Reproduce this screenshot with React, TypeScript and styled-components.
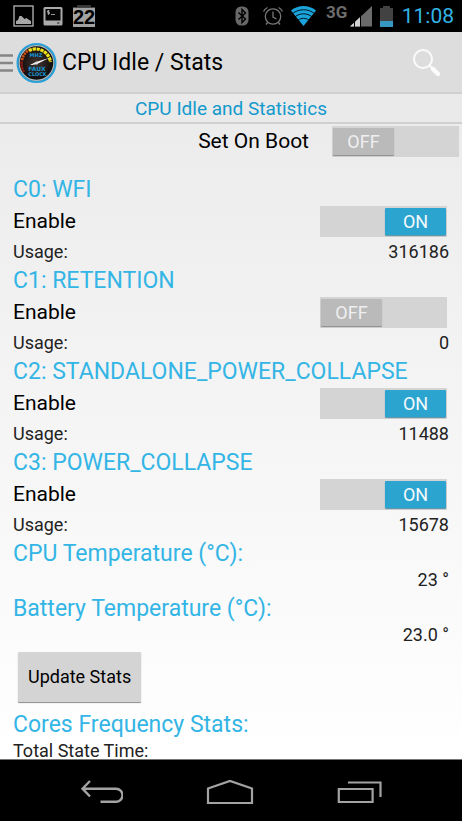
import React, { useState } from "react";
import styled, { createGlobalStyle } from "styled-components";

const GlobalStyle = createGlobalStyle`
  * { box-sizing: border-box; }
  body { margin: 0; font-family: Roboto, "Liberation Sans", sans-serif; color: #0a0a0a; background: #000; }
  svg { display: block; flex: none; }
`;

const Screen = styled.div`
  display: flex;
  flex-direction: column;
  height: 100vh;
  overflow: hidden;
`;

const StatusBar = styled.header`
  display: flex;
  align-items: center;
  justify-content: space-between;
  flex: none;
  height: 32px;
  padding: 0 8px 0 13px;
  background: #000;
`;

const StatusGroup = styled.div<{ $gap: number }>`
  display: flex;
  align-items: center;
  gap: ${(p) => p.$gap}px;
`;

const Clock = styled.time`
  margin-left: 2px;
  color: #33b5e5;
  font-size: 21px;
  line-height: 32px;
`;

const Page = styled.div`
  display: flex;
  flex-direction: column;
  flex: 1;
  min-height: 0;
  background: linear-gradient(#e9e9e9, #ffffff);
`;

const ActionBar = styled.div`
  display: flex;
  align-items: center;
  flex: none;
  height: 62px;
  padding: 2px 20px 0 0;
  background: #dddddd;
  border-bottom: 2px solid #cfcfcf;
`;

const HomeButton = styled.button`
  display: flex;
  align-items: center;
  gap: 3px;
  padding: 0;
  border: 0;
  background: none;
`;

const Title = styled.h1`
  flex: 1;
  margin: 0 0 0 5px;
  font-size: 23px;
  line-height: 32px;
  font-weight: 400;
  color: #000;
`;

const IconButton = styled.button`
  padding: 0;
  border: 0;
  background: none;
`;

const TabStrip = styled.h2`
  flex: none;
  margin: 0;
  padding-top: 1px;
  font-size: 19px;
  line-height: 27px;
  font-weight: 400;
  text-align: center;
  color: #1299cd;
  background: #eaeaea;
  border-bottom: 2px solid #d0d0d0;
`;

const Content = styled.main`
  flex: 1;
  min-height: 0;
  overflow: hidden;
`;

const BootRow = styled.div`
  display: flex;
  align-items: center;
  justify-content: flex-end;
  gap: 23px;
  height: 34px;
  margin-bottom: 16px;
  padding-right: 3px;
`;

const Stats = styled.div`
  padding: 0 13px;
`;

const Heading = styled.h3`
  margin: 0;
  padding-top: 2px;
  font-size: 23px;
  line-height: 27px;
  font-weight: 400;
  white-space: nowrap;
  color: #33b5e5;
`;

const EnableRow = styled.div`
  display: flex;
  align-items: center;
  justify-content: space-between;
  height: 36px;
  padding-right: 2px;
`;

const RowLabel = styled.label`
  font-size: 21px;
  line-height: 28px;
  color: #000;
`;

const ValueRow = styled.div`
  display: flex;
  justify-content: space-between;
  font-size: 18px;
  line-height: 26px;
  color: #222;
`;

const Value = styled.span`
  margin-left: auto;
`;

const Track = styled.span<{ $on: boolean }>`
  position: relative;
  display: flex;
  justify-content: ${(p) => (p.$on ? "flex-end" : "flex-start")};
  flex: none;
  width: 127px;
  height: 31px;
  padding: 2px 1px;
  background: #d4d4d4;
`;

const Thumb = styled.span<{ $on: boolean }>`
  width: 61px;
  height: 27px;
  border-radius: 1px;
  font-size: 18px;
  line-height: 28px;
  text-align: center;
  color: ${(p) => (p.$on ? "#f4fafc" : "#efefef")};
  background: ${(p) => (p.$on ? "#2ca4d0" : "#bababa")};
  box-shadow: 0 1px 1px ${(p) => (p.$on ? "#5790a6" : "#8c8c8c")};
`;

const SwitchInput = styled.input`
  position: absolute;
  inset: 0;
  width: 100%;
  height: 100%;
  margin: 0;
  opacity: 0;
`;

const UpdateButton = styled.button`
  display: block;
  height: 50px;
  margin: 4px 5px 7px;
  padding: 0 10px;
  border: 0;
  border-radius: 1px;
  background: #d4d4d4;
  box-shadow: 0 1px 1px #8a8a8a;
  font-family: inherit;
  font-size: 18px;
  line-height: 24px;
  color: #000;
`;

const NavBar = styled.nav`
  display: flex;
  align-items: center;
  justify-content: center;
  gap: 83px;
  flex: none;
  height: 62px;
  padding-top: 2px;
  background: #000;
  border-top: 1px solid #777;
`;

function PictureIcon() {
  return (
    <svg width="21" height="22" viewBox="0 0 21 22">
      <rect x="1" y="1" width="19" height="20" fill="none" stroke="#a0a0a0" strokeWidth="1.5" />
      <path d="M3 19v-3l2-1 1.500-4h2l3 3 2-1 2 1.500 2.500 1.500v3z" fill="#a8a8a8" />
    </svg>
  );
}

function TerminalIcon() {
  return (
    <svg width="20" height="20" viewBox="0 0 20 20">
      <rect x="0.5" y="1" width="19" height="18.500" rx="1.5" fill="#ababab" />
      <rect x="2.5" y="3" width="15" height="11.500" fill="#050505" />
      <path d="M6.500 4.800H4.500v1.500h2v1.500h-2M5.500 4v4.800M8 8.500h4" fill="none" stroke="#aaa" strokeWidth="0.900" />
      <path d="M14 17h2.500" stroke="#222" />
    </svg>
  );
}

function BatteryPercentIcon() {
  return (
    <svg width="24" height="24" viewBox="0 0 24 24" role="img" aria-label="22 percent">
      <path d="M5 1h14v2H5z" fill="#383838" />
      <rect x="1" y="3" width="22" height="2" fill="#444" />
      <rect x="1" y="4" width="22" height="19" fill="#a2a2a2" />
      <text x="12" y="20" textAnchor="middle" fontFamily="Liberation Sans, sans-serif" fontWeight="700" fontSize="20" fill="#000">22</text>
    </svg>
  );
}

function BluetoothIcon() {
  return (
    <svg width="14" height="20" viewBox="0 0 14 20">
      <rect x="0.5" y="0.5" width="13" height="19" rx="5.5" fill="#686868" />
      <path d="M3.500 6.500l7 6.500L7 16.500v-13L10.500 7l-7 6.500" fill="none" stroke="#000" strokeWidth="1.400" />
    </svg>
  );
}

function AlarmIcon() {
  return (
    <svg width="22" height="20" viewBox="0 0 22 20" fill="none" stroke="#777" strokeWidth="1.300">
      <circle cx="11" cy="10.500" r="7.700" />
      <path d="M11 5.500v5.500l3.500 2M1.500 5.500A9 9 0 0 1 5.500 1.500M16.500 1.500a9 9 0 0 1 4 4M5.500 16.500L4 18.500M16.500 16.500l1.500 2" />
    </svg>
  );
}

function WifiIcon() {
  return (
    <svg width="25" height="20" viewBox="0 0 25 20">
      <path d="M0 4.500C7-1.500 18-1.500 25 4.500L12.500 20z" fill="#1ba3dc" />
      <path d="M1.500 7.500c6.500-5 15.500-5 22 0M4 10.800c5-4 12-4 17 0M7 14.200c3.500-2.500 7.500-2.500 11 0" fill="none" stroke="#00141d" strokeWidth="1" />
    </svg>
  );
}

function SignalIcon() {
  return (
    <svg width="47" height="24" viewBox="0 0 47 24" role="img" aria-label="3G signal">
      <text x="0" y="14" fontFamily="Roboto, sans-serif" fontWeight="700" fontSize="17" fill="#6c6c6c">3G</text>
      <path d="M24 22.500L46 2v20.500z" fill="#6b6b6b" />
      <path d="M24 22.500l10-9.300v9.300z" fill="#d2d2d2" />
      <path d="M28.500 16v7M34.500 11v12" stroke="#000" />
    </svg>
  );
}

function BatteryIcon() {
  return (
    <svg width="13" height="21" viewBox="0 0 13 21">
      <path d="M3 0h7v2h3v19H0V2h3z" fill="#424242" />
      <path d="M0 15h13v6H0z" fill="#3498c1" />
    </svg>
  );
}

function MenuIcon() {
  return (
    <svg width="13" height="20" viewBox="0 0 13 20">
      <path d="M0 2.500h13M0 10h13M0 17.500h13" stroke="#858585" strokeWidth="2.600" />
    </svg>
  );
}

function GaugeIcon() {
  return (
    <svg width="41" height="42" viewBox="0 0 41 42">
      <defs>
        <radialGradient id="dial">
          <stop offset="0" stopColor="#42332f" />
          <stop offset="1" stopColor="#0d0b0b" />
        </radialGradient>
      </defs>
      <circle cx="20.500" cy="21" r="19" fill="#1b3a48" stroke="#2aa2dc" strokeWidth="2" />
      <circle cx="20.500" cy="21" r="17.300" fill="url(#dial)" stroke="#a9bac1" strokeWidth="1.200" />
      <g fill="none" strokeWidth="2.600" strokeDasharray="2.200 0.700">
        <path d="M8 30A15 15 0 0 1 6 18" stroke="#8c1c12" />
        <path d="M6 18A15 15 0 0 1 13 8" stroke="#d2521a" />
      </g>
      <path d="M13 8.500A15 15 0 0 1 34.500 20" fill="none" stroke="#f0e51b" strokeWidth="3.200" strokeDasharray="3.200 0.700" />
      <text x="20" y="14.500" textAnchor="middle" fontFamily="DejaVu Sans, sans-serif" fontWeight="700" fontSize="5" fill="#1595d1">MHZ</text>
      <path d="M14 23l6-3 13-4-12 6-5 1z" fill="#fff" />
      <circle cx="20.500" cy="21" r="1.600" fill="#ddd" />
      <text x="21" y="28.500" textAnchor="middle" fontFamily="DejaVu Sans, sans-serif" fontWeight="700" fontSize="6" fill="#1595d1">FAUX</text>
      <text x="21.500" y="34" textAnchor="middle" fontFamily="DejaVu Sans, sans-serif" fontWeight="700" fontSize="5" fill="#1595d1">CLOCK</text>
    </svg>
  );
}

function SearchIcon() {
  return (
    <svg width="30" height="30" viewBox="0 0 30 30" fill="none" stroke="#fbfbfb">
      <circle cx="11" cy="11" r="9" strokeWidth="2" />
      <path d="M17.500 17.500l3 3" strokeWidth="2.200" />
      <path d="M21 21l5 5" strokeWidth="4.500" strokeLinecap="round" />
    </svg>
  );
}

function BackIcon() {
  return (
    <svg width="44" height="24" viewBox="0 0 44 24" fill="none" stroke="#a3a3a3" strokeWidth="2.400">
      <path d="M11 1L3.500 8.700l7.500 7.800M3.500 8.700H37a6.500 6.500 0 0 1 0 13H21.500" />
    </svg>
  );
}

function HomeIcon() {
  return (
    <svg width="48" height="26" viewBox="0 0 48 26" fill="none" stroke="#a3a3a3" strokeWidth="2.200">
      <path d="M2 24V9.500L24 2l22 7.500V24z" />
    </svg>
  );
}

function RecentsIcon() {
  return (
    <svg width="46" height="24" viewBox="0 0 46 24" fill="none" stroke="#a3a3a3" strokeWidth="2.200">
      <path d="M1.800 9h33.800v13H1.800zM11 2.500h32.500V17" />
    </svg>
  );
}

function Switch({ id, initial }: { id: string; initial: boolean }) {
  const [on, setOn] = useState(initial);
  return (
    <Track $on={on}>
      <Thumb $on={on} aria-hidden="true">{on ? "ON" : "OFF"}</Thumb>
      <SwitchInput id={id} type="checkbox" role="switch" checked={on} onChange={(e) => setOn(e.target.checked)} />
    </Track>
  );
}

const states = [
  { name: "C0: WFI", on: true, usage: "316186" },
  { name: "C1: RETENTION", on: false, usage: "0" },
  { name: "C2: STANDALONE_POWER_COLLAPSE", on: true, usage: "11488" },
  { name: "C3: POWER_COLLAPSE", on: true, usage: "15678" },
];

const temperatures = [
  { name: "CPU Temperature (°C):", value: "23 °" },
  { name: "Battery Temperature (°C):", value: "23.0 °" },
];

export default function App() {
  return (
    <Screen>
      <GlobalStyle />
      <StatusBar>
        <StatusGroup $gap={9}>
          <PictureIcon />
          <TerminalIcon />
          <BatteryPercentIcon />
        </StatusGroup>
        <StatusGroup $gap={7}>
          <StatusGroup $gap={10}>
            <StatusGroup $gap={7}>
              <StatusGroup $gap={13}>
                <BluetoothIcon />
                <AlarmIcon />
              </StatusGroup>
              <WifiIcon />
            </StatusGroup>
            <SignalIcon />
          </StatusGroup>
          <BatteryIcon />
          <Clock>11:08</Clock>
        </StatusGroup>
      </StatusBar>
      <Page>
        <ActionBar>
          <HomeButton aria-label="Open menu">
            <MenuIcon />
            <GaugeIcon />
          </HomeButton>
          <Title>CPU Idle / Stats</Title>
          <IconButton aria-label="Search">
            <SearchIcon />
          </IconButton>
        </ActionBar>
        <TabStrip>CPU Idle and Statistics</TabStrip>
        <Content>
          <BootRow>
            <RowLabel htmlFor="boot">Set On Boot</RowLabel>
            <Switch id="boot" initial={false} />
          </BootRow>
          <Stats>
            {states.map((s, i) => (
              <section key={s.name}>
                <Heading>{s.name}</Heading>
                <EnableRow>
                  <RowLabel htmlFor={`state-${i}`}>Enable</RowLabel>
                  <Switch id={`state-${i}`} initial={s.on} />
                </EnableRow>
                <ValueRow>
                  <span>Usage:</span>
                  <Value>{s.usage}</Value>
                </ValueRow>
              </section>
            ))}
            {temperatures.map((t) => (
              <section key={t.name}>
                <Heading>{t.name}</Heading>
                <ValueRow>
                  <Value>{t.value}</Value>
                </ValueRow>
              </section>
            ))}
            <UpdateButton>Update Stats</UpdateButton>
            <Heading>Cores Frequency Stats:</Heading>
            <ValueRow>
              <span>Total State Time:</span>
            </ValueRow>
          </Stats>
        </Content>
      </Page>
      <NavBar>
        <IconButton aria-label="Back">
          <BackIcon />
        </IconButton>
        <IconButton aria-label="Home">
          <HomeIcon />
        </IconButton>
        <IconButton aria-label="Recent apps">
          <RecentsIcon />
        </IconButton>
      </NavBar>
    </Screen>
  );
}
